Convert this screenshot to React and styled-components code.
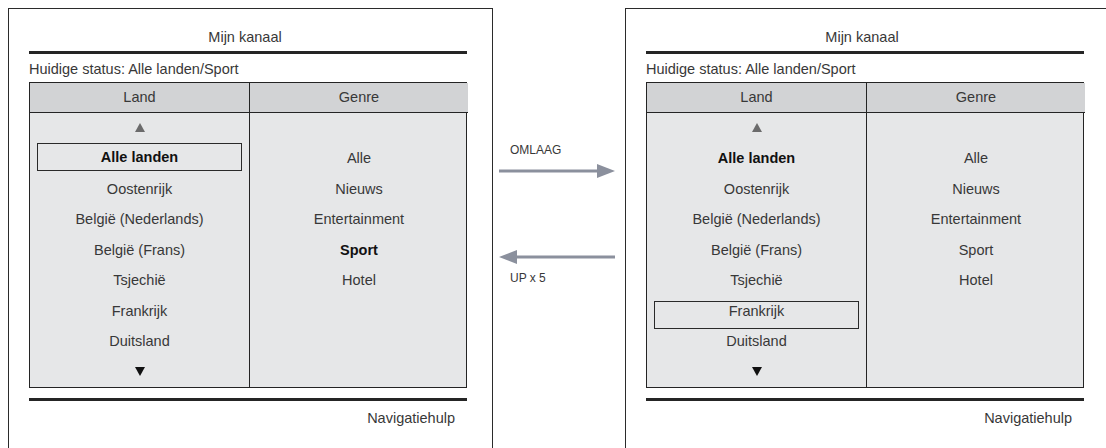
import React from 'react';
import styled, { createGlobalStyle } from 'styled-components';

const GlobalStyle = createGlobalStyle`
    html, body {
        margin: 0;
        padding: 0;
        background: #ffffff;
    }
    body {
        font-family: "Liberation Sans", Arial, sans-serif;
        color: #383838;
    }
`

const lands = ['Alle landen', 'Oostenrijk', 'België (Nederlands)', 'België (Frans)', 'Tsjechië', 'Frankrijk', 'Duitsland'];
const genres = ['Alle', 'Nieuws', 'Entertainment', 'Sport', 'Hotel'];

const ArrowRight = () => (
    <svg width="116" height="14" viewBox="0 0 116 14">
        <rect x="0" y="5.5" width="100" height="3" fill="#8b909d" />
        <polygon points="98,0 116,7 98,14" fill="#8b909d" />
    </svg>
)

const ArrowLeft = () => (
    <svg width="116" height="14" viewBox="0 0 116 14">
        <rect x="16" y="5.5" width="100" height="3" fill="#8b909d" />
        <polygon points="18,0 0,7 18,14" fill="#8b909d" />
    </svg>
)

// scroll marks above and below the Land list
const Triangle = ({ up }) => (
    <svg width="10" height="9" viewBox="0 0 10 9">
        {up
            ? <polygon points="5,0 10,9 0,9" fill="#6b6b6b" />
            : <polygon points="0,0 10,0 5,9" fill="#111111" />}
    </svg>
)

const Screen = ({ selected, box }) => {
    return (
        <Panel>
            <Title>Mijn kanaal</Title>
            <Rule />
            <Status>Huidige status: Alle landen/Sport</Status>
            <Table>
                <HeadCell>Land</HeadCell>
                <HeadCell $divider>Genre</HeadCell>
                <Column>
                    <Row><Triangle up /></Row>
                    {lands.map((land) => (
                        <Row key={land}>
                            {land === selected ? (
                                <SelectBox $top={box.top} $shift={box.shift}>
                                    <Item $bold={land === 'Alle landen'}>{land}</Item>
                                </SelectBox>
                            ) : (
                                <Item $bold={land === 'Alle landen'}>{land}</Item>
                            )}
                        </Row>
                    ))}
                    <Row><Triangle /></Row>
                </Column>
                <Column $divider>
                    <Row />
                    {genres.map((genre) => (
                        <Row key={genre}>
                            <Item $bold={genre === 'Sport' && selected === 'Alle landen'}>{genre}</Item>
                        </Row>
                    ))}
                </Column>
            </Table>
            <Rule $low />
            <Footer>Navigatiehulp</Footer>
        </Panel>
    )
}

const App = () => {
    return (
        <Page>
            <GlobalStyle />
            <Screen selected="Alle landen" box={{ top: 0, shift: 0 }} />
            <Middle>
                <Step>
                    <StepLabel>OMLAAG</StepLabel>
                    <ArrowRight />
                </Step>
                <Step $back>
                    <ArrowLeft />
                    <StepLabel>UP x 5</StepLabel>
                </Step>
            </Middle>
            <Screen selected="Frankrijk" box={{ top: 5.5, shift: 8 }} />
        </Page>
    )
}

const Page = styled.div`
    display: flex;
    align-items: flex-start;
    width: 1106px;
    height: 448px;
    overflow: hidden;
    padding: 8px 0 0 8px;
    box-sizing: border-box;
`

const Panel = styled.div`
    flex: none;
    width: 485px;
    height: 470px;
    box-sizing: border-box;
    border: 1.5px solid #2b2b2b;
    padding: 0 25px 0 20px;
    display: flex;
    flex-direction: column;
`

const Title = styled.div`
    padding-top: 18px;
    padding-bottom: 3.5px;
    line-height: 20px;
    font-size: 14.5px;
    text-align: center;
    margin-left: -6px;
`

const Rule = styled.div`
    height: 3px;
    background: #252525;
    margin-top: ${p => (p.$low ? '10px' : '0')};
`

const Status = styled.div`
    margin-top: 5px;
    line-height: 20px;
    font-size: 14.5px;
`

const Table = styled.div`
    margin-top: 3px;
    display: grid;
    grid-template-columns: 219px 219px;
    border: 1.5px solid #242424;
    background: #e6e7e8;
`

const HeadCell = styled.div`
    height: 29px;
    display: flex;
    align-items: center;
    justify-content: center;
    font-size: 14.5px;
    background: #d2d3d5;
    border-bottom: 1.5px solid #242424;
    border-left: ${p => (p.$divider ? '1.5px solid #242424' : 'none')};
`

const Column = styled.div`
    display: flex;
    flex-direction: column;
    border-left: ${p => (p.$divider ? '1.5px solid #242424' : 'none')};
`

const Row = styled.div`
    height: 30.5px;
    display: flex;
    align-items: center;
    justify-content: center;

    svg {
        display: block;
    }
`

const Item = styled.span`
    font-size: 14.5px;
    font-weight: ${p => (p.$bold ? 700 : 400)};
    color: ${p => (p.$bold ? '#111111' : '#383838')};
    white-space: nowrap;
`

const SelectBox = styled.div`
    align-self: flex-start;
    margin: ${p => p.$top}px 7px 0 7px;
    width: calc(100% - 14px);
    height: 28px;
    box-sizing: border-box;
    border: 1.5px solid #2a2a2a;
    padding-bottom: ${p => p.$shift}px;
    display: flex;
    align-items: center;
    justify-content: center;
`

const Footer = styled.div`
    margin-top: 7px;
    padding-right: 12px;
    line-height: 20px;
    font-size: 14.5px;
    text-align: right;
`

const Middle = styled.div`
    flex: none;
    width: 132px;
    padding-top: 134px;
    display: flex;
    flex-direction: column;
`

const Step = styled.div`
    display: flex;
    flex-direction: column;
    gap: 6px;
    padding-left: 6px;
    margin-top: ${p => (p.$back ? '72px' : '0')};

    svg {
        display: block;
    }
`

const StepLabel = styled.div`
    padding-left: 11px;
    font-size: 12px;
    line-height: 16px;
    color: #383838;
`

export default App
